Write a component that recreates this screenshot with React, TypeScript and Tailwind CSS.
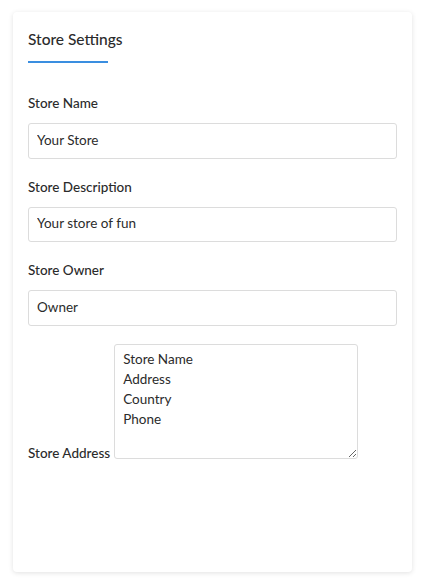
export default function App() {
  return (
    <div className="min-h-[582px] bg-white pt-[12px] pl-[13px] font-['Lato','Open_Sans',sans-serif] text-[#2b2b2b]">
      <div className="w-[399px] h-[560px] rounded-[4px] bg-white px-[15px] pt-[17px] shadow-[0_1px_5px_rgba(0,0,0,0.12)]">
        <h2 className="text-[15.5px] leading-[20px] font-medium">Store Settings</h2>
        <div className="mt-[12px] h-[2px] w-[80px] bg-[#3a8ee0]" />

        <div className="mt-[30px] flex flex-col">
          <label className="text-[13.5px] leading-[20px] font-medium">Store Name</label>
          <input
            defaultValue="Your Store"
            className="mt-[10px] h-[35.5px] w-full rounded-[3px] border border-[#dcdcdc] px-[8px] pb-[2px] text-[13.5px] text-[#2b2b2b] outline-none"
          />

          <label className="mt-[18px] text-[13.5px] leading-[20px] font-medium">Store Description</label>
          <input
            defaultValue="Your store of fun"
            className="mt-[10px] h-[35.5px] w-full rounded-[3px] border border-[#dcdcdc] px-[8px] pb-[2px] text-[13.5px] text-[#2b2b2b] outline-none"
          />

          <label className="mt-[18px] text-[13.5px] leading-[20px] font-medium">Store Owner</label>
          <input
            defaultValue="Owner"
            className="mt-[10px] h-[35.5px] w-full rounded-[3px] border border-[#dcdcdc] px-[8px] pb-[2px] text-[13.5px] text-[#2b2b2b] outline-none"
          />

          <div className="mt-[18px] flex items-end gap-[4px]">
            <label className="text-[13.5px] leading-[12px] font-medium">Store Address</label>
            <textarea
              defaultValue={"Store Name\nAddress\nCountry\nPhone"}
              className="h-[115px] w-[244px] rounded-[3px] border border-[#dcdcdc] px-[8px] pt-[4px] text-[13.5px] leading-[20px] text-[#2b2b2b] outline-none"
            />
          </div>
        </div>
      </div>
    </div>
  )
}
